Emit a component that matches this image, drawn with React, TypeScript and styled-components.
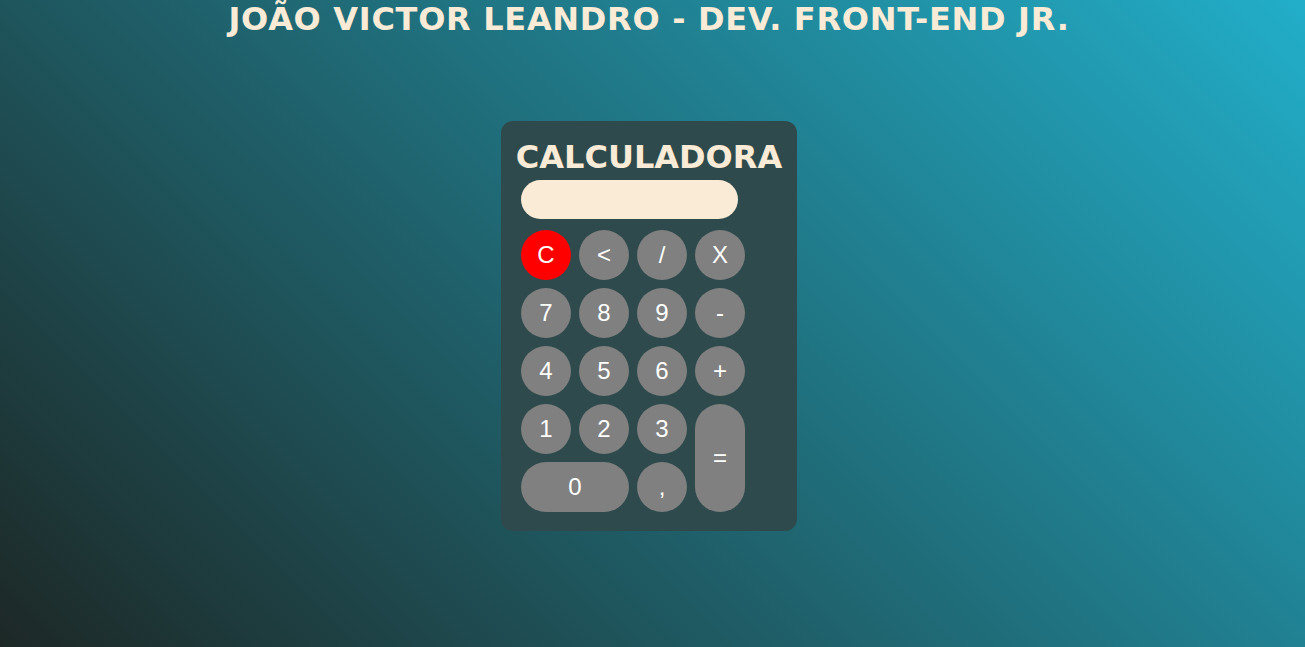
import React from "react";
import styled, { createGlobalStyle } from "styled-components";

const Global = createGlobalStyle`
  html, body { margin: 0; padding: 0; }
  body {
    min-height: 647px;
    background: linear-gradient(45deg, #1d2826 0%, #22aec9 100%);
    font-family: "DejaVu Sans", Verdana, sans-serif;
  }
`;

const Page = styled.div`
  display: flex;
  flex-direction: column;
  align-items: center;
  min-height: 647px;
  padding-right: 7px;
`;

const Heading = styled.h1`
  margin: 0;
  font-size: 32px;
  font-weight: bold;
  color: #faebd7;
  line-height: 38px;
  letter-spacing: 0.7px;
  white-space: nowrap;
`;

const Card = styled.div`
  margin-top: 83px;
  width: 296px;
  box-sizing: border-box;
  padding: 18px 15px 19px;
  background: #2f4a4c;
  border-radius: 12px;
  display: flex;
  flex-direction: column;
  align-items: center;
`;

const CardTitle = styled.h2`
  margin: 0;
  font-size: 32px;
  font-weight: bold;
  line-height: 37px;
  color: #faebd7;
  white-space: nowrap;
`;

const Display = styled.div`
  align-self: flex-start;
  margin: 4px 0 0 5px;
  width: 217px;
  height: 39px;
  border-radius: 20px;
  background: #faebd7;
`;

const Keys = styled.div`
  align-self: flex-start;
  margin: 11px 0 0 5px;
  display: grid;
  grid-template-columns: repeat(4, 50px);
  grid-auto-rows: 50px;
  gap: 8px;
`;

const Key = styled.button<{ $bg?: string; $wide?: boolean; $tall?: boolean }>`
  border: none;
  padding: 0;
  border-radius: 25px;
  background: ${(p) => p.$bg ?? "#808080"};
  color: #ffffff;
  font-family: "Liberation Sans", Arial, sans-serif;
  font-size: 24px;
  cursor: pointer;
  grid-column: ${(p) => (p.$wide ? "span 2" : "auto")};
  grid-row: ${(p) => (p.$tall ? "span 2" : "auto")};
`;

export default function App() {
  return (
    <>
      <Global />
      <Page>
        <Heading>JOÃO VICTOR LEANDRO - DEV. FRONT-END JR.</Heading>
        <Card>
          <CardTitle>CALCULADORA</CardTitle>
          <Display />
          <Keys>
            <Key $bg="#ff0000">C</Key>
            <Key>&lt;</Key>
            <Key>/</Key>
            <Key>X</Key>
            <Key>7</Key>
            <Key>8</Key>
            <Key>9</Key>
            <Key>-</Key>
            <Key>4</Key>
            <Key>5</Key>
            <Key>6</Key>
            <Key>+</Key>
            <Key>1</Key>
            <Key>2</Key>
            <Key>3</Key>
            <Key $tall>=</Key>
            <Key $wide>0</Key>
            <Key>,</Key>
          </Keys>
        </Card>
      </Page>
    </>
  );
}
